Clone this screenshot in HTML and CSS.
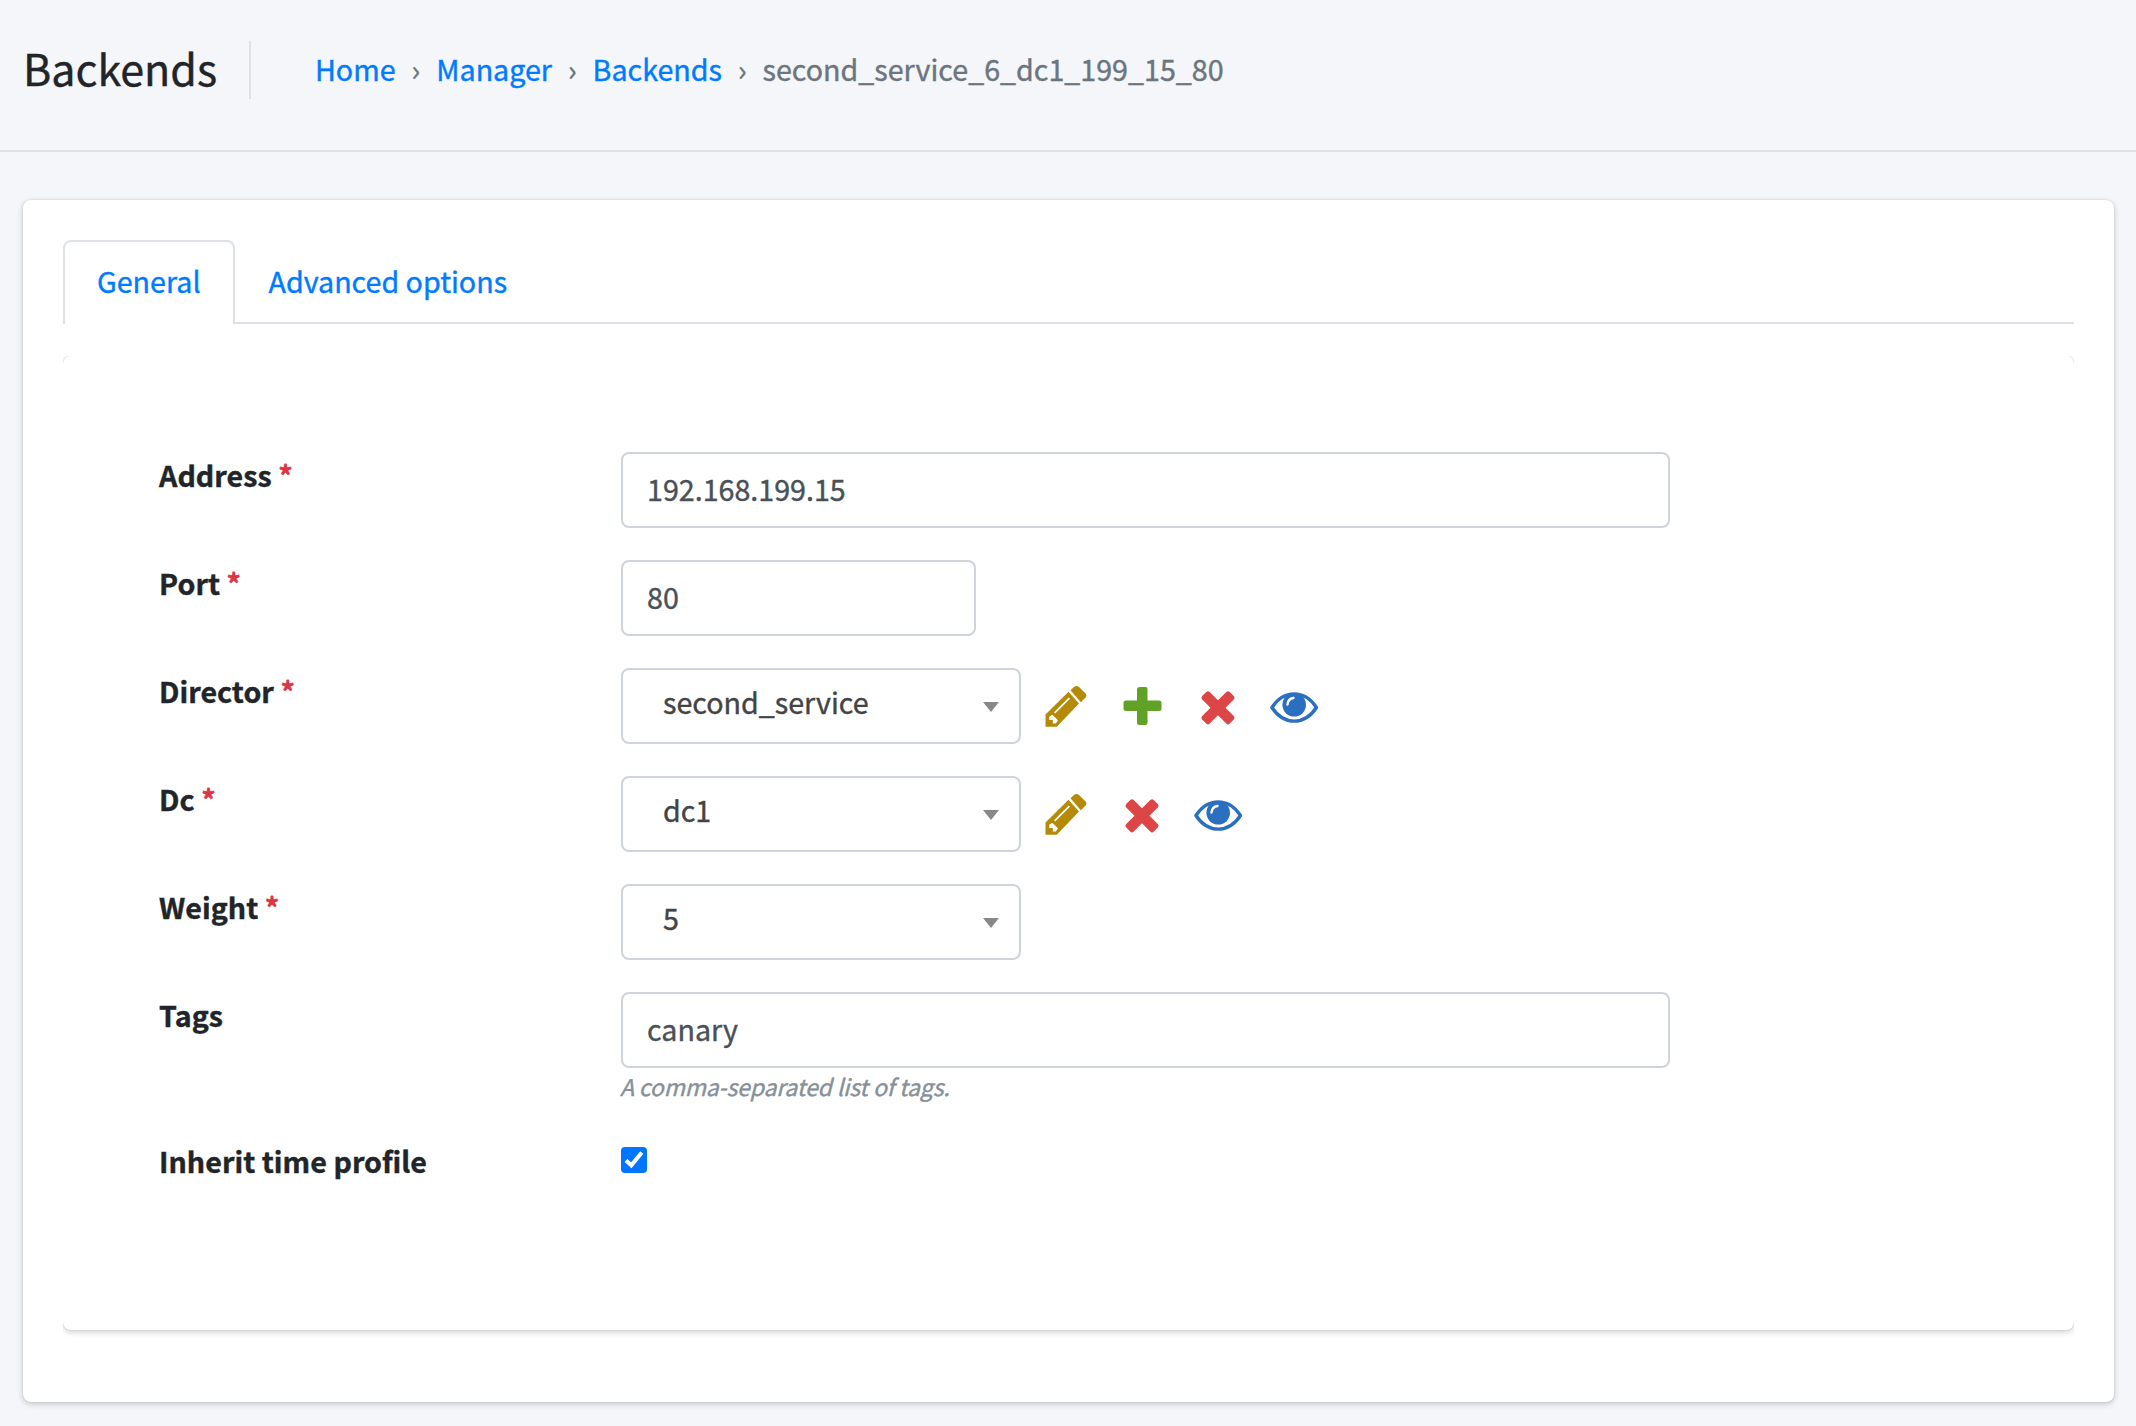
FILE: index.html
```html
<!DOCTYPE html>
<html lang="en">
<head>
<meta charset="utf-8">
<title>Backends</title>
<link rel="stylesheet" href="styles.css">
</head>
<body>
<svg class="sprite" width="0" height="0" aria-hidden="true">
  <symbol id="pencil" viewBox="0 0 48 48">
    <path fill="#b58a08" fill-rule="evenodd" d="M3.500 32.500 26.500 9.800 37 21.400 14.800 44.700H3.500ZM10.300 32.700 7.200 34.800V38H10.800V41.500H13.900L16 38.200ZM12 30.300 13.200 31.500 28 16.700 26.800 15.500Z"/>
    <path fill="#b58a08" d="M28.500 8.300 32.500 4.600Q34.600 3.200 36.700 4.800L43.600 11.400Q45.400 13.400 43.800 15.200L38.800 20.200Z"/>
  </symbol>
  <symbol id="plus" viewBox="0 0 48 48">
    <path fill="#60a226" d="M22 5H27.500Q29.500 5 29.500 7V18.500H41Q43.500 18.500 43.500 21V26.500Q43.500 29 41 29H29.500V40.500Q29.500 43 27 43H21.500Q19 43 19 40.500V29H8Q5.500 29 5.500 26.500V21Q5.500 18.500 8 18.500H19V7.500Q19 5 22 5Z"/>
  </symbol>
  <symbol id="cross" viewBox="0 0 48 48">
    <g fill="#dd4646">
      <rect x="4.500" y="20.500" width="39" height="10.600" rx="2.500" transform="rotate(45 24 25.800)"/>
      <rect x="4.500" y="20.500" width="39" height="10.600" rx="2.500" transform="rotate(-45 24 25.800)"/>
    </g>
  </symbol>
  <symbol id="eye" viewBox="0 0 48 48">
    <path fill="none" stroke="#2b70c0" stroke-width="3.400" stroke-linejoin="round" d="M1.900 25.500Q11 11.900 24.200 11.900T46.500 25.500Q37.500 39.100 24.200 39.100T1.900 25.500Z"/>
    <circle cx="24.200" cy="22.800" r="11.800" fill="#2b70c0"/>
    <path fill="none" stroke="#fff" stroke-width="2.400" stroke-linecap="round" d="M17.500 22.500Q18 16.800 23.500 16"/>
  </symbol>
</svg>

<header class="page-header">
  <h1 class="page-title">Backends</h1>
  <nav class="breadcrumb">
    <a href="#">Home</a><span class="sep">›</span>
    <a href="#">Manager</a><span class="sep">›</span>
    <a href="#">Backends</a><span class="sep">›</span>
    <span class="current">second_service_6_dc1_199_15_80</span>
  </nav>
</header>

<main class="card">
  <ul class="tabs">
    <li><a class="tab active" href="#">General</a></li>
    <li><a class="tab" href="#">Advanced options</a></li>
  </ul>
  <div class="tab-content">
    <form class="panel">
      <div class="row">
        <label class="label">Address <span class="req">*</span></label>
        <div class="control input wide">192.168.199.15</div>
      </div>
      <div class="row">
        <label class="label">Port <span class="req">*</span></label>
        <div class="control input short">80</div>
      </div>
      <div class="row">
        <label class="label">Director <span class="req">*</span></label>
        <div class="control select">second_service<i class="caret"></i></div>
        <div class="actions">
          <svg><use href="#pencil"/></svg>
          <svg><use href="#plus"/></svg>
          <svg><use href="#cross"/></svg>
          <svg><use href="#eye"/></svg>
        </div>
      </div>
      <div class="row">
        <label class="label">Dc <span class="req">*</span></label>
        <div class="control select">dc1<i class="caret"></i></div>
        <div class="actions">
          <svg><use href="#pencil"/></svg>
          <svg><use href="#cross"/></svg>
          <svg><use href="#eye"/></svg>
        </div>
      </div>
      <div class="row">
        <label class="label">Weight <span class="req">*</span></label>
        <div class="control select">5<i class="caret"></i></div>
      </div>
      <div class="row">
        <label class="label">Tags</label>
        <div>
          <div class="control input wide">canary</div>
          <div class="help">A comma-separated list of tags.</div>
        </div>
      </div>
      <div class="row">
        <label class="label">Inherit time profile</label>
        <span class="checkbox"><svg viewBox="0 0 26 26"><path fill="none" stroke="#fff" stroke-width="4" d="M5 13.500 10.300 18.300 20.800 5.500"/></svg></span>
      </div>
    </form>
  </div>
</main>
</body>
</html>
```
FILE: styles.css
```css
* { box-sizing: border-box; }

body {
  margin: 0;
  min-height: 1426px;
  background: #f4f6f9;
  color: #212529;
  font-family: "Noto Sans CJK SC", "Noto Sans", sans-serif;
  font-size: 28.65px;
  line-height: 46px;
  -webkit-text-stroke: .4px currentColor;
}

a { color: #007bff; text-decoration: none; }

.sprite { display: block; }

.page-header {
  display: flex;
  align-items: flex-start;
  height: 152px;
  padding: 41px 0 0 23px;
  border-bottom: 2px solid #dee2e6;
}

.page-title {
  width: 228px;
  height: 58px;
  margin: 0;
  border-right: 2px solid #dee2e6;
  font-size: 43px;
  font-weight: 400;
  line-height: 52px;
  white-space: nowrap;
}

.breadcrumb {
  display: flex;
  padding: 5px 0 0 64px;
  color: #6c757d;
  white-space: nowrap;
}

.sep { padding: 0 16px; }

.card {
  height: 1202px;
  margin: 48px 22px 0 23px;
  padding: 40px;
  border-radius: 8px;
  background: #fff;
  box-shadow: 0 0 2px rgba(0, 0, 0, .125), 0 2px 6px rgba(0, 0, 0, .2);
}

.tabs {
  display: flex;
  height: 84px;
  margin: 0;
  padding: 0;
  border-bottom: 2px solid #dee2e6;
  list-style: none;
}

.tab {
  display: block;
  height: 84px;
  padding: 16px 32px;
  border: 2px solid transparent;
  border-bottom: 0;
  white-space: nowrap;
}

.tab.active {
  border-color: #dee2e6;
  border-radius: 8px 8px 0 0;
  background: #fff;
}

.tab-content {
  margin-top: 32px;
  padding-bottom: 16px;
  overflow: hidden;
}

.panel {
  height: 974px;
  padding: 96px;
  border-radius: 8px;
  background: #fff;
  box-shadow: 0 0 2px rgba(0, 0, 0, .125), 0 2px 6px rgba(0, 0, 0, .2);
}

.row {
  display: flex;
  align-items: flex-start;
  margin-bottom: 32px;
}

.label {
  width: 462px;
  font-weight: 700;
  letter-spacing: .03px;
}

.req { color: #dc3545; }

.control {
  height: 76px;
  border: 2px solid #ced4da;
  border-radius: 8px;
  background: #fff;
  white-space: nowrap;
}

.input {
  padding: 12px 24px;
  color: #495057;
}

.wide { width: 1049px; }
.short { width: 355px; }

.select {
  display: flex;
  justify-content: space-between;
  width: 400px;
  padding: 9px 20px 0 40px;
  color: #444;
}

.caret {
  width: 16px;
  height: 10px;
  margin-top: 23px;
  background: #888;
  clip-path: polygon(0 0, 100% 0, 50% 100%);
}

.actions {
  display: flex;
  gap: 28px;
  padding: 14px 0 0 20.5px;
}

.actions svg { width: 48px; height: 48px; }

.help {
  height: 38px;
  margin-left: -1px;
  color: #869099;
  font-size: 22.9px;
  font-style: italic;
  letter-spacing: -.1px;
  line-height: 36px;
}

.checkbox {
  width: 26px;
  height: 26px;
  margin-top: 9px;
  border-radius: 4px;
  background: #0075ff;
}

.checkbox svg { display: block; width: 26px; height: 26px; }
```
